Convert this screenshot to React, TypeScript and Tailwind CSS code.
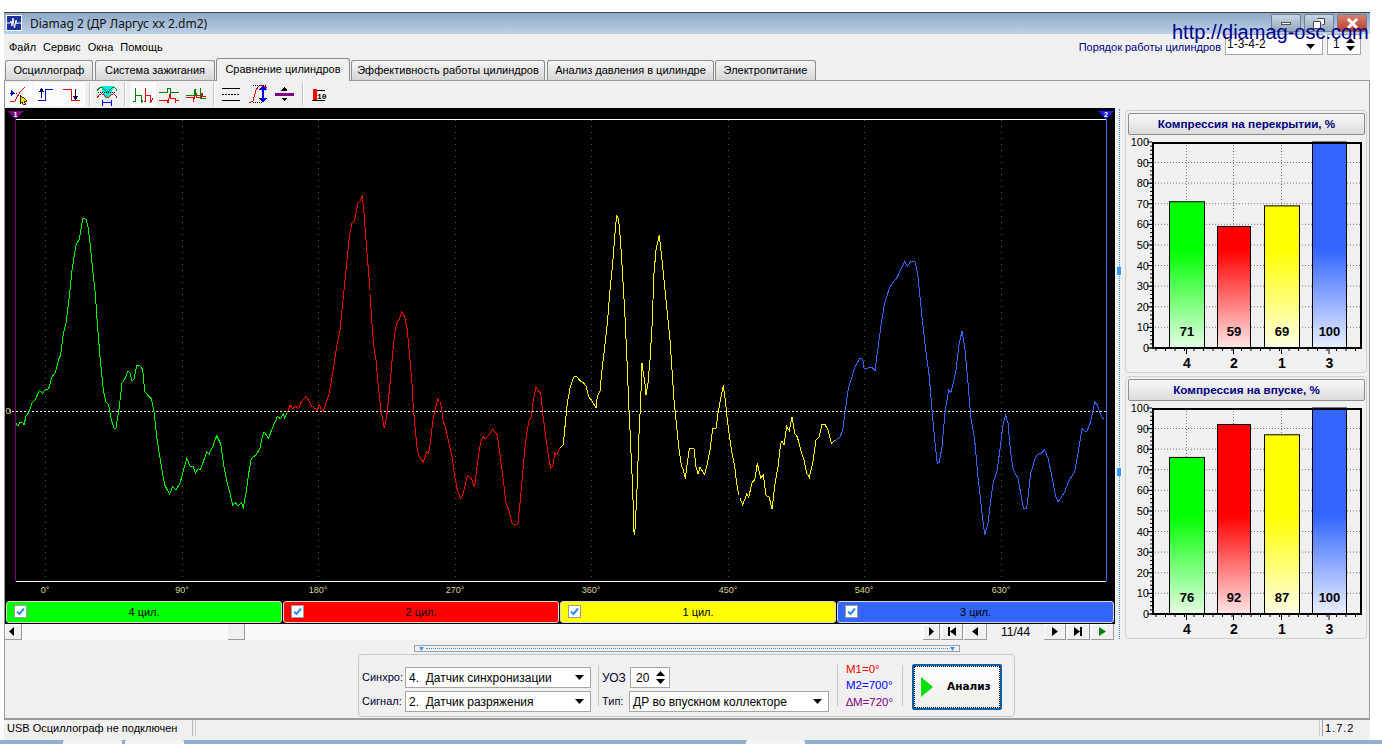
import React from "react";

// traces were read off 3x crops, so each one carries its crop origin
const toPts = (raw: string, ox: number, oy: number) =>
  raw
    .trim()
    .split(/\s+/)
    .map((p) => {
      const [x, y] = p.split(",").map(Number);
      return `${(ox + x / 3).toFixed(1)},${(oy + y / 3).toFixed(1)}`;
    })
    .join(" ");

const GREEN = toPts(
  "18,700 24,708 30,697 38,697 42,706 48,678 56,668 66,640 75,630 88,602 98,610 104,600 116,596 126,560 136,548 146,508 152,495 160,430 168,400 178,320 186,240 198,165 208,148 218,85 228,88 234,110 240,160 248,240 256,310 262,400 270,500 280,600 287,635 296,645 304,690 312,714 318,714 328,650 336,580 344,568 354,542 360,550 366,574 372,568 380,527 390,527 398,538 404,604 412,614 424,626 432,665 440,740 448,790 456,840 464,885 472,900 479,912 488,890 498,900 510,880 518,850 530,805 540,828 550,830 556,850 564,836 572,838 590,785 598,792 610,765 620,737 632,762 642,830 652,880 660,910 668,945 676,938 684,948 694,938 700,952 708,910 716,850 724,805 738,795 750,775 756,745 762,725 776,745 784,722 802,680 812,686 820,672 824,684 832,668",
  10,
  190
);
const RED_A = toPts(
  "832,668 840,645 848,656 856,648 866,656 872,638 888,620 898,634 904,648 916,656 922,660 928,644 934,658 940,664 950,632 958,610 968,550 980,470 990,420 1000,320 1008,240 1018,140 1026,100 1034,90 1044,38 1050,34 1057,16 1062,70 1072,200 1080,300",
  10,
  190
);
const RED_B = toPts(
  "0,285 8,400 12,445 18,480 24,550 32,625 43,685 50,650 56,590 62,530 68,460 74,400 80,370 88,358 95,335 104,350 112,390 120,480 126,550 130,620 136,690 142,750 148,770 160,787 166,770 170,755 176,760 182,720 188,665 196,625 203,598 212,608 220,665 226,680 240,745 248,780 254,830 262,870 272,895 280,880 292,827 304,835 314,862 322,790 332,725 340,710 346,716 356,706 368,688 382,704 390,765 400,840 408,910 418,935 426,970 436,976 444,970 450,910 458,820 466,730 476,665 484,650 490,600 498,562 506,574 512,580 518,640 526,700 534,760 542,805 548,800 554,760 560,765 570,745",
  370,
  200
);
const YELLOW_A = toPts(
  "570,745 580,735 586,670 592,610 600,565 606,545 612,530 620,530 630,542 640,548 648,558 656,590 664,600 678,624 682,590 690,572 696,510 704,440 712,370 720,270 728,190 734,110 740,45 746,60 752,130 758,230 764,330 770,460 776,610 780,690 784,780 788,860 791,990 794,1005 798,930 802,850 806,720 812,600 816,490 820,520 824,540 828,585 834,550 840,480 846,380 852,220 858,150 868,105 876,180 884,260 892,340 900,420 906,510 912,600 920,680 926,740 934,795 940,810 946,836 952,790 958,746 972,746 978,800 984,822 990,802 1004,824 1012,790 1020,750 1028,686 1038,684 1044,640 1050,606 1060,556 1066,600 1072,660 1080,720 1086,760 1094,800 1100,850 1106,885",
  370,
  200
);
const YELLOW_B = toPts(
  "0,775 8,795 20,762 26,772 36,728 44,720 52,670 62,715 70,705 78,766 88,772 96,808 106,725 114,680 122,610 126,602 132,615 140,560 148,572 156,530 164,580 172,590 182,630 192,660 200,700 208,712 218,670 228,600 238,590 246,552 254,552 264,570 274,610 284,602",
  740,
  240
);
const BLUE = toPts(
  "284,602 300,592 308,570 316,510 326,440 336,410 346,378 360,355 368,358 372,385 384,384 396,382 405,392 412,340 424,250 434,190 448,145 460,125 470,115 484,85 494,65 502,78 512,65 526,66 534,110 544,210 556,320 568,410 576,510 584,600 592,670 598,668 606,620 616,510 626,450 632,458 640,430 648,390 656,320 666,272 674,320 684,430 692,530 704,600 714,710 724,800 734,885 744,850 752,780 760,725 772,690 782,610 790,550 797,524 804,550 812,640 820,690 834,715 844,770 850,804 860,804 872,700 884,660 890,645 904,640 914,630 924,655 936,710 946,765 954,785 962,775 974,755 988,720 1004,695 1014,640 1026,566 1040,576 1052,545 1064,485 1072,495 1080,520 1090,537",
  740,
  240
);

const GRID = [
  [45, "0°"],
  [182, "90°"],
  [318, "180°"],
  [455, "270°"],
  [591, "360°"],
  [728, "450°"],
  [864, "540°"],
  [1001, "630°"],
] as const;

const TraceLine = ({ points, color }: { points: string; color: string }) => (
  <polyline points={points} fill="none" stroke={color} strokeWidth={1} shapeRendering="crispEdges" />
);

const Plot = () => (
  <svg width={1110} height={493} viewBox="5 108 1110 493" className="block shrink-0">
    {GRID.map(([x, label]) => (
      <g key={x}>
        <line x1={x + 0.5} x2={x + 0.5} y1={120} y2={578} stroke="#5a5a5a" strokeDasharray="1 5" />
        <text x={x} y={593} textAnchor="middle" fontSize={9} fill="#d6d89a" fontFamily="Liberation Sans">
          {label}
        </text>
      </g>
    ))}
    <line x1={16} x2={1106} y1={119.5} y2={119.5} stroke="#ffffff" />
    <line x1={16} x2={1106} y1={581.5} y2={581.5} stroke="#ffffff" />
    <line x1={15.5} x2={15.5} y1={112} y2={581} stroke="#800080" />
    <line x1={1106.5} x2={1106.5} y1={112} y2={581} stroke="#3366ff" />
    <line x1={12} x2={1106} y1={411.5} y2={411.5} stroke="#ffffff" strokeDasharray="2 2" />
    <rect x={10} y={409} width={1} height={4} fill="#f5a030" />
    <text x={8} y={414} textAnchor="middle" fontSize={9} fill="#d6d89a" fontFamily="Liberation Sans">
      0
    </text>
    <TraceLine points={GREEN} color="#00ff00" />
    <TraceLine points={RED_A} color="#ff0000" />
    <TraceLine points={RED_B} color="#ff0000" />
    <TraceLine points={YELLOW_A} color="#ffff00" />
    <TraceLine points={YELLOW_B} color="#ffff00" />
    <TraceLine points={BLUE} color="#3366ff" />
    <polygon points="7,111 24,111 15.5,119" fill="#800080" />
    <text x={15.5} y={117} textAnchor="middle" fontSize={7} fontWeight={700} fill="#fff" fontFamily="Liberation Sans">
      1
    </text>
    <polygon points="1098,111 1114,111 1106,119" fill="#1a1aff" />
    <text x={1106} y={117} textAnchor="middle" fontSize={7} fontWeight={700} fill="#fff" fontFamily="Liberation Sans">
      2
    </text>
  </svg>
);

const BAR_X = [
  { x: 43, w: 35, c: "#00ff00", id: "g" },
  { x: 91, w: 33, c: "#ff0000", id: "r" },
  { x: 138, w: 35, c: "#ffff00", id: "y" },
  { x: 186, w: 34, c: "#3366ff", id: "b" },
];
const LABELS = ["4", "2", "1", "3"];

const BarChart = ({ title, values, uid }: { title: string; values: number[]; uid: string }) => (
  <div className="h-[263px] w-[242px] shrink-0 rounded-[4px] border border-[#d0d0d0] pt-[2px]">
    <div className="mx-[2px] flex h-[22px] w-[237px] items-center justify-center rounded-[2px] border border-[#8c8c8c] bg-gradient-to-b from-[#f8f8f8] to-[#dcdcdc] font-['Liberation_Sans',sans-serif] text-[11.7px] font-bold text-[#000080]">
      {title}
    </div>
    <svg width={240} height={236} viewBox="0 0 240 236" className="block">
      <defs>
        {BAR_X.map((b) => (
          <linearGradient key={b.id} id={uid + b.id} gradientUnits="userSpaceOnUse" x1={0} x2={0} y1={115} y2={213}>
            <stop offset="0" stopColor={b.c} />
            <stop offset="1" stopColor={b.c} stopOpacity={0.1} />
          </linearGradient>
        ))}
      </defs>
      <rect x={26} y={7} width={210} height={206} fill="#f0f0f0" />
      {Array.from({ length: 9 }, (_, i) => (
        <line key={i} x1={26} x2={236} y1={27.5 + i * 20.6} y2={27.5 + i * 20.6} stroke="#777" strokeDasharray="1 2" />
      ))}
      {[60, 107, 155, 203].map((x) => (
        <line key={x} x1={x + 0.5} x2={x + 0.5} y1={7} y2={213} stroke="#777" strokeDasharray="1 2" />
      ))}
      {Array.from({ length: 11 }, (_, i) => {
        const y = 213 - i * 20.6;
        return (
          <g key={i}>
            <line x1={21} x2={26} y1={y} y2={y} stroke="#000" />
            <text x={23} y={y + 4} textAnchor="end" fontSize={11} fontFamily="Liberation Sans" fill="#000">
              {i * 10}
            </text>
          </g>
        );
      })}
      {Array.from({ length: 50 }, (_, i) => (
        <line key={i} x1={24} x2={26} y1={213 - i * 4.12} y2={213 - i * 4.12} stroke="#000" />
      ))}
      {BAR_X.map((b, i) => {
        const h = (values[i] / 100) * 206;
        return (
          <g key={b.id}>
            <rect x={b.x + 0.5} y={213 - h} width={b.w} height={h} fill="#fff" />
            <rect x={b.x + 0.5} y={213 - h} width={b.w} height={h} fill={`url(#${uid + b.id})`} stroke="#000" />
            <text x={b.x + b.w / 2 + 0.5} y={201} textAnchor="middle" fontSize={13} fontWeight={700} fontFamily="Liberation Sans" fill="#000">
              {values[i]}
            </text>
            <line x1={b.x + b.w / 2} x2={b.x + b.w / 2} y1={213} y2={219} stroke="#000" />
            <text x={b.x + b.w / 2 + 0.5} y={233} textAnchor="middle" fontSize={14} fontWeight={700} fontFamily="Liberation Sans" fill="#000">
              {LABELS[i]}
            </text>
          </g>
        );
      })}
      {Array.from({ length: 22 }, (_, i) => (
        <line key={i} x1={30 + i * 9.5} x2={30 + i * 9.5} y1={213} y2={216} stroke="#000" />
      ))}
      <rect x={27} y={8} width={208} height={205} fill="none" stroke="#000" strokeWidth={2} />
    </svg>
  </div>
);

const Arrow = ({ dir = "down", className = "" }: { dir?: "down" | "up"; className?: string }) => (
  <svg width={9} height={5} viewBox="0 0 9 5" className={"block shrink-0 " + className}>
    <polygon points={dir === "down" ? "0,0 9,0 4.5,5" : "0,5 9,5 4.5,0"} fill="#000" />
  </svg>
);

const Combo = ({ text, width }: { text: string; width: string }) => (
  <div className={"flex h-[21px] items-center justify-between border border-[#a6a6a6] bg-white pl-[3px] pr-[6px] text-[12px] text-black " + width}>
    <span className="whitespace-pre">{text}</span>
    <Arrow />
  </div>
);

const Spin = ({ value, width }: { value: string; width: string }) => (
  <div className={"flex h-[21px] items-center justify-between border border-[#a6a6a6] bg-white pl-[5px] pr-[4px] text-[12px] text-black " + width}>
    <span>{value}</span>
    <div className="flex flex-col gap-[3px]">
      <Arrow dir="up" />
      <Arrow />
    </div>
  </div>
);

const IconBtn = ({ children, on }: { children: React.ReactNode; on?: boolean }) => (
  <div className={"h-[24px] w-[26px] shrink-0 " + (on ? "bg-[#fbfbfb] shadow-[inset_-1px_-1px_0_#fff]" : "")}>
    <svg width={26} height={24} viewBox="0 0 26 24" fill="none" shapeRendering="crispEdges" className="block">
      {children}
    </svg>
  </div>
);

const ToolSep = ({ mx }: { mx: string }) => <div className={"h-[24px] w-[2px] shrink-0 border-l border-r border-l-[#c4c4c4] border-r-white " + mx} />;

const Toolbar = () => (
  <div className="flex h-[26px] items-start pl-[1px] pt-[1px]">
    <IconBtn on>
      <path d="M4 19h5l5-9 5-5" stroke="#e00000" />
      <path d="M4 11h7" stroke="#0000e0" strokeDasharray="2 1" />
      <polygon points="5,8 5,14 9,11" fill="#0000e0" />
      <polygon points="14,13 14,22 16,20 18,23 20,22 18,19 21,19" fill="#ffe000" stroke="#000" strokeWidth={0.8} />
    </IconBtn>
    <div className="w-[1px] shrink-0" />
    <IconBtn on>
      <path d="M5 18.5h7.5v-11H20" stroke="#0000e0" />
      <polygon points="8.5,6 5.5,10 11.5,10" fill="#000060" />
      <path d="M8.5 9v7" stroke="#000060" />
    </IconBtn>
    <IconBtn on>
      <path d="M4 7.5h8.5v11H21" stroke="#e00000" />
      <polygon points="16.5,18 13.5,14 19.5,14" fill="#000060" />
      <path d="M16.5 7v8" stroke="#000060" />
    </IconBtn>
    <ToolSep mx="ml-[4px] mr-[3px]" />
    <IconBtn>
      <polygon points="7,4 20,4 17,12 15,16 11,16 9,12" fill="#00e8e8" />
      <path d="M3 9c3-5 5-5 8-1 2 2 4 2 5 0 3-4 5-4 7 1" stroke="#009000" />
      <path d="M3 16c3-5 5-5 8-2 2 2 4 2 5 0 3-3 5-3 7 2" stroke="#e00000" />
      <path d="M4 10.5h18" stroke="#000" strokeDasharray="1 1" />
      <path d="M8 20.5h10" stroke="#0000e0" />
      <path d="M8.5 17.5v6M17.5 17.5v6" stroke="#0000e0" />
    </IconBtn>
    <ToolSep mx="ml-[4px] mr-[4px]" />
    <IconBtn on>
      <path d="M3 19.5H5.5V6V13.5H11.5V21L13 18" stroke="#008000" />
      <path d="M14 19.5H15.5V6V13.5H20.5V21L23 16" stroke="#e00000" />
    </IconBtn>
    <IconBtn>
      <path d="M3 10.5H11V6.5H14V13V10.5H23" stroke="#008000" />
      <path d="M3 18.5H11L12 21L14 12V16.5H19V20.5L20 18.5H23" stroke="#e00000" />
    </IconBtn>
    <div className="w-[1px] shrink-0" />
    <IconBtn>
      <path d="M3 15.5H10V20L13 11V15.5H18V11H19V14.5H23" stroke="#e00000" />
      <path d="M3 13.5H11V7H12V13.5H17V6V16H23" stroke="#008000" />
    </IconBtn>
    <ToolSep mx="ml-[4px] mr-[3px]" />
    <IconBtn>
      <path d="M4 6.5h18M4 18.5h18" stroke="#000" />
      <path d="M4 12.5h18" stroke="#000" strokeDasharray="2 1" />
    </IconBtn>
    <div className="w-[1px] shrink-0" />
    <IconBtn>
      <path d="M4 21l4-2 3-11 3-4 4-1 4 3" stroke="#e00000" />
      <path d="M8 3.5h14M8 20.5h10" stroke="#000" strokeDasharray="1 1" />
      <path d="M18 6v12" stroke="#0000e0" strokeWidth={2} />
      <polygon points="18,3 14,8 22,8" fill="#0000e0" />
      <polygon points="18,21 14,16 22,16" fill="#0000e0" />
    </IconBtn>
    <div className="w-[1px] shrink-0" />
    <IconBtn>
      <path d="M3 12h19" stroke="#800080" strokeWidth={3} />
      <polygon points="12.5,5 9.5,8.5 15.5,8.5" fill="#000" />
      <polygon points="12.5,19 9.5,15.5 15.5,15.5" fill="#000" />
    </IconBtn>
    <ToolSep mx="ml-[4px] mr-[2px]" />
    <IconBtn>
      <rect x={7} y={7} width={4} height={11} fill="#ff0000" />
      <path d="M6 18.5h13M11 8.5h8" stroke="#000" />
      <text x={11} y={17} fontSize={8} fontWeight={700} fontFamily="Liberation Mono" fill="#000">
        10
      </text>
    </IconBtn>
  </div>
);

const TABS = [
  { label: "Осциллограф", w: "w-[88px] ml-[1px]" },
  { label: "Система зажигания", w: "w-[120px] ml-[2px]" },
  { label: "Сравнение цилиндров", w: "w-[134px] ml-[1px]", active: true },
  { label: "Эффективность работы цилиндров", w: "w-[194px] ml-[1px]" },
  { label: "Анализ давления в цилиндре", w: "w-[167px] ml-[2px]" },
  { label: "Электропитание", w: "w-[101px] ml-[1px]" },
];

const Tabs = () => (
  <div className="relative z-10 flex h-[23px] shrink-0 items-end">
    {TABS.map((t) => (
      <div
        key={t.label}
        className={
          "flex items-center justify-center rounded-t-[3px] border border-[#8c8c8c] text-[11px] text-black " +
          t.w +
          (t.active ? " h-[23px] border-b-0 bg-[#f0f0f0] pb-[2px]" : " mb-[1px] h-[20px] border-b-0 bg-gradient-to-b from-[#f6f6f6] to-[#d6d6d6]")
        }
      >
        {t.label}
      </div>
    ))}
  </div>
);

const CYL = [
  { name: "4 цил.", bg: "bg-[#00ff00]", w: "w-[276px]" },
  { name: "2 цил.", bg: "bg-[#ff0000]", w: "w-[276px]" },
  { name: "1 цил.", bg: "bg-[#ffff00]", w: "w-[276px]" },
  { name: "3 цил.", bg: "bg-[#3366ff]", w: "w-[277px]" },
];

const CylBar = ({ name, bg, w }: { name: string; bg: string; w: string }) => (
  <div className={"relative flex h-[22px] items-center justify-center rounded-[3px] border border-[#d8d8d8] text-[11px] text-black " + bg + " " + w}>
    <div className="absolute left-[7px] top-[3px] flex h-[13px] w-[13px] items-center justify-center border border-[#9a9a9a] bg-white">
      <svg width={9} height={9} viewBox="0 0 9 9">
        <path d="M1 4.5l2.5 2.5L8 1.5" stroke="#2f8fe8" strokeWidth={2} fill="none" />
      </svg>
    </div>
    {name}
  </div>
);

const NavGlyph = ({ d }: { d: string }) => (
  <svg width={12} height={9} viewBox="0 0 12 9" className="block">
    <path d={d} fill="currentColor" />
  </svg>
);

const NavBtn = ({ d, w, color = "text-black" }: { d: string; w: string; color?: string }) => (
  <div className={"flex h-[16px] items-center justify-center border-b border-r border-b-[#9a9a9a] border-r-[#9a9a9a] bg-[#f0f0f0] shadow-[inset_1px_1px_0_#fff] " + w + " " + color}>
    <NavGlyph d={d} />
  </div>
);

const ScrollRow = () => (
  <div className="flex h-[17px] items-start bg-[#f0f0f0]">
    <NavBtn d="M7 0v9L2 4.5z" w="w-[17px]" />
    <div className="h-[16px] w-[206px] bg-[#fafafa]" />
    <div className="h-[16px] w-[17px] border-b border-r border-b-[#9a9a9a] border-r-[#9a9a9a] bg-[#f0f0f0]" />
    <div className="h-[16px] w-[678px] bg-[#fafafa]" />
    <NavBtn d="M4 0v9l5-4.5z" w="w-[17px]" />
    <div className="w-[1px]" />
    <NavBtn d="M2 0h2v9H2zM10 0v9L4 4.5z" w="w-[22px]" />
    <div className="w-[1px]" />
    <NavBtn d="M9 0v9L3 4.5z" w="w-[23px]" />
    <div className="flex h-[16px] w-[57px] items-center justify-center text-[12px] text-black">11/44</div>
    <NavBtn d="M3 0v9l6-4.5z" w="w-[22px]" />
    <div className="w-[1px]" />
    <NavBtn d="M2 0v9l6-4.5zM8 0h2v9H8z" w="w-[23px]" />
    <div className="w-[1px]" />
    <NavBtn d="M3 0v9l7-4.5z" w="w-[23px]" color="text-[#008000]" />
  </div>
);

const Splitter = () => (
  <div className="ml-[409px] mt-[4px] flex h-[7px] w-[546px] items-center justify-between border border-[#a0a0a0] px-[4px]">
    <svg width={5} height={4} viewBox="0 0 5 4" className="shrink-0">
      <polygon points="0,0 5,0 2.5,4" fill="#3399ff" />
    </svg>
    <div className="mx-[2px] flex-1 border-t border-dotted border-[#3399ff]" />
    <svg width={5} height={4} viewBox="0 0 5 4" className="shrink-0">
      <polygon points="0,0 5,0 2.5,4" fill="#3399ff" />
    </svg>
  </div>
);

const VSplit = () => (
  <div className="relative ml-[2px] mr-[3px] w-[5px] shrink-0">
    <div className="absolute left-[2px] top-[2px] bottom-[2px] border-l border-dotted border-[#3399ff]" />
    <div className="absolute left-0 top-[160px] h-[8px] w-[4px] bg-[#3399ff]" />
    <div className="absolute left-0 top-[361px] h-[8px] w-[4px] bg-[#3399ff]" />
  </div>
);

const ControlPanel = () => (
  <div className="ml-[353px] mt-[2px] flex h-[63px] w-[657px] rounded-[4px] border border-[#c8c8c8] text-[12px]">
    <div className="flex w-[239px] flex-col gap-[3px] pl-[3px] pt-[12px]">
      <div className="flex items-center">
        <span className="w-[43px] text-[11px] text-[#000033]">Синхро:</span>
        <Combo text="4.  Датчик синхронизации" width="w-[186px]" />
      </div>
      <div className="flex items-center">
        <span className="w-[43px] text-[11px] text-[#000033]">Сигнал:</span>
        <Combo text="2.  Датчик разряжения" width="w-[186px]" />
      </div>
    </div>
    <div className="my-[10px] w-px bg-[#c8c8c8]" />
    <div className="flex w-[238px] flex-col gap-[3px] pl-[3px] pt-[12px]">
      <div className="flex items-center">
        <span className="w-[28px] text-[#000033]">УОЗ</span>
        <Spin value="20" width="w-[40px]" />
      </div>
      <div className="flex items-center">
        <span className="w-[27px] text-[11px] text-[#000033]">Тип:</span>
        <Combo text="ДР во впускном коллекторе" width="w-[200px]" />
      </div>
    </div>
    <div className="my-[10px] w-px bg-[#c8c8c8]" />
    <div className="flex w-[64px] flex-col justify-center pl-[8px] text-[11.5px] leading-[16.5px]">
      <span className="text-[#ff0000]">M1=0°</span>
      <span className="text-[#0000ff]">M2=700°</span>
      <span className="text-[#800080]">∆M=720°</span>
    </div>
    <div className="my-[10px] w-px bg-[#c8c8c8]" />
    <div className="ml-[9px] mt-[9px] flex h-[46px] w-[90px] items-center rounded-[2px] border-2 border-[#0f5ea8] bg-gradient-to-b from-white to-[#eeeeea] outline outline-1 -outline-offset-3 outline-dotted outline-black">
      <svg width={12} height={20} viewBox="0 0 12 20" className="ml-[7px] shrink-0">
        <polygon points="0,0 12,10 0,20" fill="#00e000" />
      </svg>
      <span className="ml-[14px] font-['DejaVu_Sans',sans-serif] text-[10.5px] font-bold text-black">Анализ</span>
    </div>
  </div>
);

const WinBtn = ({ className, children }: { className: string; children: React.ReactNode }) => (
  <div className={"flex h-[18px] w-[30px] items-center justify-center rounded-[2px] border border-[#6f7f90] " + className}>{children}</div>
);

export default function App() {
  return (
    <div className="relative flex h-[744px] w-[1382px] flex-col overflow-hidden bg-white font-['Liberation_Sans',sans-serif] text-[11px] text-black">
      <div className="h-[12px] shrink-0" />
      <div className="ml-[4px] flex h-[728px] w-[1366px] shrink-0 flex-col border-t border-[#444444] bg-[#f0f0f0]">
        {/* заголовок окна */}
        <div className="flex h-[21px] shrink-0 items-start bg-gradient-to-b from-[#8ea9c6] to-[#bcd1e6]">
          <svg width={16} height={16} viewBox="0 0 16 16" className="ml-[2px] mt-[2px] shrink-0">
            <rect width={16} height={16} fill="#fff" />
            <rect x={1} y={1} width={14} height={14} fill="#1a2f9e" />
            <path d="M1 8h3l1-2 1 5 1-8 1.5 10L10 5l1 4 1-1h3" stroke="#fff" fill="none" />
          </svg>
          <span className="ml-[8px] mt-[2px] font-['Noto_Sans',sans-serif] text-[12px] leading-[18px] text-[#111]">Diamag 2 (ДР Ларгус xx 2.dm2)</span>
          <div className="ml-auto mr-[3px] mt-[1px] flex gap-[3px]">
            <WinBtn className="bg-gradient-to-b from-[#c8d6e4] to-[#93a8bd]">
              <div className="h-[3px] w-[10px] border border-[#555] bg-white" />
            </WinBtn>
            <WinBtn className="bg-gradient-to-b from-[#c8d6e4] to-[#93a8bd]">
              <svg width={12} height={11} viewBox="0 0 12 11">
                <path d="M4.5.5h7v6h-2M.5 3.5h7v7h-7z" stroke="#444" fill="#fff" />
              </svg>
            </WinBtn>
            <WinBtn className="bg-gradient-to-b from-[#d67f6e] to-[#b8402c]">
              <svg width={13} height={11} viewBox="0 0 13 11">
                <path d="M2 1l9 9M11 1l-9 9" stroke="#fff" strokeWidth={3} />
              </svg>
            </WinBtn>
          </div>
        </div>

        {/* меню */}
        <div className="flex h-[24px] shrink-0 items-start">
          <div className="mt-[5px] flex gap-[7px] pl-[5px] text-[11px]">
            <span>Файл</span>
            <span>Сервис</span>
            <span>Окна</span>
            <span>Помощь</span>
          </div>
          <div className="ml-auto mr-[9px] flex items-start">
            <span className="mr-[4px] mt-[5px] text-[11px] text-[#000080]">Порядок работы цилиндров</span>
            <div className="flex h-[21px] w-[98px] items-start justify-between border border-[#a6a6a6] bg-white pl-[1px] pr-[7px] text-[12px]">
              <span>1-3-4-2</span>
              <Arrow className="mt-[9px]" />
            </div>
            <div className="ml-[4px] flex h-[21px] w-[34px] items-start justify-between border border-[#a6a6a6] bg-white pl-[5px] pr-[5px] text-[12px]">
              <span>1</span>
              <div className="mt-[3px] flex flex-col gap-[3px]">
                <Arrow dir="up" />
                <Arrow />
              </div>
            </div>
          </div>
        </div>

        <Tabs />

        {/* содержимое вкладки */}
        <div className="-mt-px flex h-[640px] shrink-0 flex-col border border-b-2 border-[#9a9a9a] bg-[#f0f0f0]">
          <Toolbar />
          <div className="flex h-[534px] shrink-0">
            <div className="flex w-[1110px] shrink-0 flex-col pt-[1px]">
              <div className="bg-black">
                <Plot />
                <div className="flex h-[23px] gap-[1px] px-[1px]">
                  {CYL.map((c) => (
                    <CylBar key={c.name} {...c} />
                  ))}
                </div>
              </div>
              <ScrollRow />
            </div>
            <VSplit />
            <div className="flex flex-col gap-[3px] pt-[3px]">
              <BarChart uid="a" title="Компрессия на перекрытии, %" values={[71, 59, 69, 100]} />
              <BarChart uid="b" title="Компрессия на впуске, %" values={[76, 92, 87, 100]} />
            </div>
          </div>
          <Splitter />
          <ControlPanel />
        </div>

        {/* строка состояния */}
        <div className="flex h-[17px] shrink-0 gap-[2px]">
          <div className="flex h-[16px] w-[189px] items-center whitespace-nowrap border-r border-[#b8b8b8] pl-[3px] text-[11px]">USB Осциллограф не подключен</div>
          <div className="h-[16px] w-[1125px] border-l border-r border-[#c8c8c8]" />
          <div className="flex h-[16px] flex-1 items-center border-l border-[#a0a0a0] pl-[2px] text-[11px] tracking-[1px]">1.7.2</div>
        </div>
      </div>

      {/* кусок панели задач */}
      <div className="flex h-[4px] shrink-0 bg-[#8fb0cf]">
        <div className="ml-[63px] w-[59px] rounded-t-[2px] bg-[#f4f4f4]" />
        <div className="ml-[3px] w-[59px] rounded-t-[2px] bg-[#f4f4f4]" />
        <div className="ml-[562px] w-[59px] rounded-t-[2px] bg-[#f4f4f4]" />
      </div>

      {/* адрес сайта поверх окна */}
      <div className="absolute left-[1172px] top-[20px] whitespace-nowrap text-[20px] leading-[24px] text-[#000090]">http://diamag-osc.com</div>
    </div>
  );
}
